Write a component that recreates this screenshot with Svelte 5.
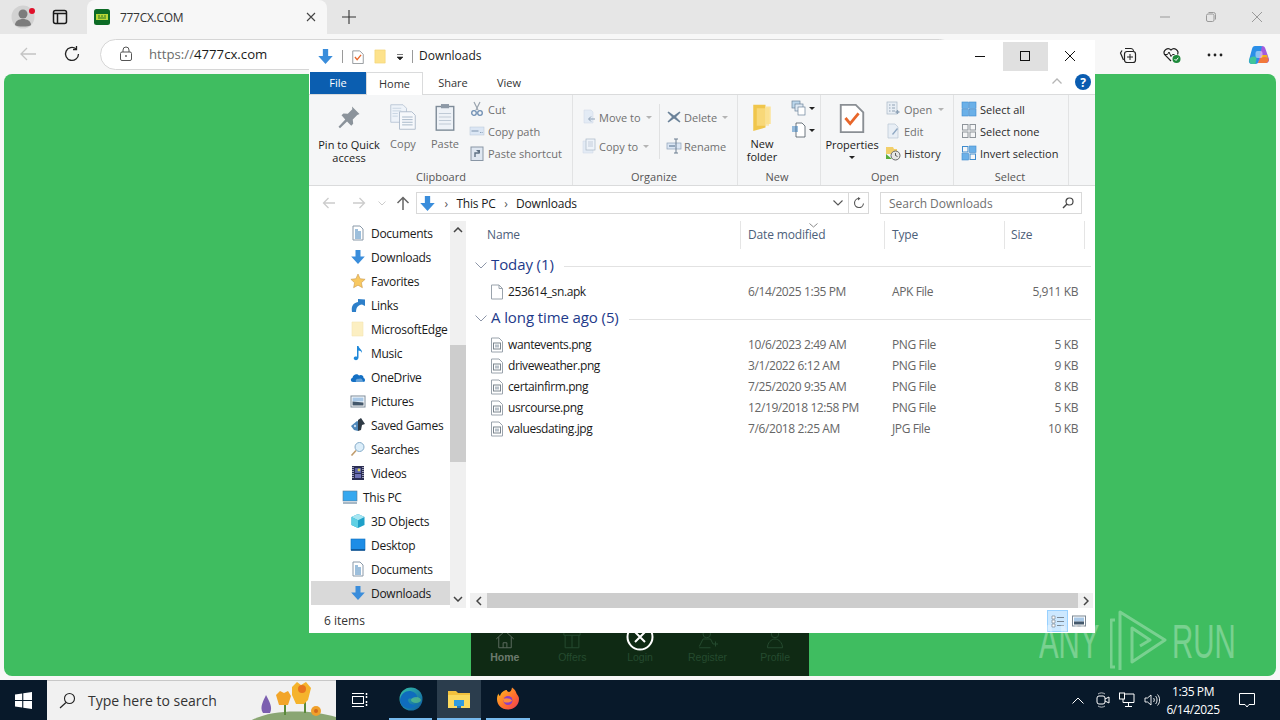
<script>
const icons = {
  dl: '<path d="M5.500 1h5v6.500h4.300L8 15 1.200 7.500h4.300z" fill="#3a8ddb"/>',
  doc: '<path d="M3 1h7l3 3v11H3z" fill="#fff" stroke="#8a99a8"/><path d="M5 5h3M5 7h6M5 9h6M5 11h6M5 13h6" stroke="#3b7fb8"/>',
  star: '<path d="M8 1l2.100 4.700 5 .6-3.700 3.400 1 5L8 12.200 3.600 14.700l1-5L.9 6.300l5-.6z" fill="#f8c860" stroke="#c99a50" stroke-width=".6"/>',
  links: '<path d="M2 15C1 9 3 6 8 5V2l7 .5V9l-3-1.500C8 8 6 10.500 6 15z" fill="#2d7fc9"/>',
  folderPale: '<path d="M2 1h11v14H2z" fill="#fcefc2" stroke="#f3e4b4" stroke-width=".6"/>',
  qfolder: '<path d="M2 1h11v14H2z" fill="#fde28c" stroke="#f0d070" stroke-width=".6"/>',
  music: '<path d="M7 1h1.500c.5 3 4 3.500 3.500 7-.6-2-2.500-2.500-3.500-2.600V12.500C8.500 14.500 6.600 15.500 5 15c-1.800-.6-1.500-3 .3-3.400.6-.1 1.200-.1 1.700.1z" fill="#1f88d9"/>',
  cloud: '<path d="M3 13c-2.500 0-3-3.500-.5-4.200C3 5.500 7 4 9 6.500c2.500-1.500 5 .5 4.500 2.500 2 .4 2 4 0 4z" fill="#1470c4"/><path d="M6 13c-1-2 1-4 3-3 1.500-1 3.500 0 3.500 1.500l1.500 1.500z" fill="#fff" opacity=".35"/>',
  pictures: '<rect x="1" y="3" width="14" height="11" fill="#fff" stroke="#7d8b99"/><path d="M2.500 4.500h11v4H2.500z" fill="#a9c8e6"/><path d="M2.500 8.500c4 0 7 1 11 1v3h-11z" fill="#44586b"/>',
  games: '<path d="M1 9l6-5 2 1-1 9-4-1z" fill="#4d86b8"/><path d="M8 3l3-2 4 6-3 1-1 5-3 1z" fill="#2f3a45"/><circle cx="5" cy="9" r="1.200" fill="#c5dcf0"/>',
  search: '<circle cx="9.500" cy="6" r="4.500" fill="#dceefa" stroke="#86acc9"/><path d="M6 9.500L1.500 14.500" stroke="#c09c6c" stroke-width="1.600"/>',
  videos: '<rect x="2" y="1" width="12" height="14" fill="#2a2d52"/><path d="M3 2v12M13 2v12" stroke="#dde" stroke-width="1.300" stroke-dasharray="1 1"/><rect x="5" y="3" width="6" height="5" fill="#5a60a8"/><rect x="5" y="9" width="6" height="4" fill="#6d70b5"/><circle cx="9" cy="5" r="1.400" fill="#d6cf55"/>',
  pc: '<rect x="1" y="2" width="14" height="10" fill="#36a8ef" stroke="#5b7a94" stroke-width=".6"/><path d="M1 14h14" stroke="#8aa0b3" stroke-width="1.500"/>',
  objects: '<path d="M8 1l6.500 3v8L8 15l-6.500-3V4z" fill="#1ea0c8"/><path d="M8 1l6.500 3L8 7.200 1.500 4z" fill="#a7e6f2"/><path d="M1.500 4L8 7.200V15l-6.500-3z" fill="#5fd0e4"/>',
  desktop: '<rect x="1" y="2" width="14" height="11" fill="#1d8de6" stroke="#0e6dbb" stroke-width=".6"/><path d="M1 13h14" stroke="#0b4e8c" stroke-width="1.500"/>',
  file: '<path d="M2.500 1h7.500l3.500 3.500v10.500H2.500z" fill="#fff" stroke="#9aa3ac"/><path d="M10 1v3.500h3.500" fill="none" stroke="#9aa3ac"/>',
  img: '<path d="M2.500 1h7.500l3.500 3.500v10.500H2.500z" fill="#fff" stroke="#9aa3ac"/><rect x="4.500" y="6" width="7" height="6" fill="#fff" stroke="#7b858e"/><rect x="6" y="7.500" width="4" height="3" fill="#b8c1c9"/>',
  pin: '<path d="M10 1l5 5-1.500.6-3 3 .3 2.900-1.300 1.300-2.800-2.800L2 15.500l-1-1 4.500-4.800L3 6.900l1.300-1.300 2.900.3 3-3z" fill="#8b939b"/>',
  copy: '<path d="M1 1h7l2 2v8H1z" fill="#eef3f9" stroke="#b7c4d3" stroke-width=".5"/><path d="M6 5h7l2 2v8H6z" fill="#f6f8fb" stroke="#aab8c8" stroke-width=".5"/><path d="M7.500 8h6M7.500 9.500h6M7.500 11h6M7.500 12.500h6" stroke="#9fb0c4" stroke-width=".5"/><path d="M2 3h5M2 4.500h5M2 6h3M2 7.500h3" stroke="#c6d2e0" stroke-width=".5"/>',
  paste: '<rect x="3" y="2" width="10" height="13.500" fill="#eef2f7" stroke="#7e8b98" stroke-width=".8"/><rect x="5.700" y=".6" width="4.600" height="2.400" fill="#8d99a6"/><path d="M4.500 6h7M4.500 8h7M4.500 10h7M4.500 12h7" stroke="#bfcad6" stroke-width=".6"/>',
  cut: '<path d="M5 1l4 8M11 1L7 9" stroke="#9aa4ae" stroke-width="1.200"/><circle cx="5" cy="12" r="2.300" fill="none" stroke="#6f8eb3" stroke-width="1.300"/><circle cx="11" cy="12" r="2.300" fill="none" stroke="#6f8eb3" stroke-width="1.300"/>',
  path: '<rect x="1" y="4" width="14" height="8" fill="#dbe6f4" stroke="#b7c6d8" stroke-width=".5"/><path d="M2.500 8h7M11 9.500h.8M12.700 9.500h.8" stroke="#7c93ad"/>',
  shortcut: '<rect x="2" y="2" width="12" height="13.500" fill="#dfe7f1" stroke="#8996a5"/><path d="M6 12V8h4" fill="none" stroke="#5f7184" stroke-width="1.400"/><path d="M7 5h4v4z" fill="#5f7184"/>',
  move: '<path d="M3 1h7l2 2v11H3z" fill="#e3ebf5" stroke="#ccd7e4" stroke-width=".5"/><path d="M14 10H8M10 7.500L7.500 10l2.500 2.500" stroke="#8fa2b7" fill="none"/>',
  copyto: '<path d="M2 3h10v12H2z" fill="#e3ebf5" stroke="#ccd7e4" stroke-width=".5"/><rect x="5" y="1" width="9" height="11" fill="#eef3f9" stroke="#a9b7c6" stroke-width=".7"/><path d="M7 4h5M7 6h5M7 8h5" stroke="#a9b7c6" stroke-width=".6"/>',
  del: '<path d="M2.500 2.500L8 6.500l5.500-4 1 1L10 8l4.500 4.500-1 1L8 9.500l-5.500 4-1-1L6 8 1.500 3.500z" fill="#6b8299"/>',
  rename: '<rect x="1" y="5" width="14" height="6" fill="#dbe6f4" stroke="#8fa2b7" stroke-width=".7"/><path d="M3 8h6" stroke="#7c93ad" stroke-width="1.500"/><path d="M10 1v14M8 1h4M8 15h4" stroke="#6b7d90"/>',
  folderBig: '<path d="M3 1h7v13l-7 2z" fill="#f0c64c"/><path d="M10 2h3v10h-3z" fill="#fbe39a"/><path d="M5 3h7v10H5z" fill="#fbdf8b" opacity=".7"/>',
  newItem: '<rect x="1" y="1" width="8" height="7" fill="#bcd7ec" stroke="#6b8299" stroke-width=".7"/><rect x="4" y="4" width="8" height="7" fill="#dfeaf4" stroke="#6b8299" stroke-width=".7"/><rect x="7" y="7" width="7" height="8" fill="#fff" stroke="#6b8299" stroke-width=".7"/>',
  easy: '<path d="M5 1h6l3 3v11H5z" fill="#fff" stroke="#4a5560" stroke-width=".8"/><path d="M1 5h6M1 7h6M1 9h6" stroke="#1f6fb5" stroke-width=".9"/>',
  props: '<path d="M2 1h8l4 4v10.500H2z" fill="#fff" stroke="#8a8f94"/><path d="M4.500 8l2.500 3 4.500-5.500" fill="none" stroke="#e8662a" stroke-width="1.500"/>',
  open: '<rect x="2" y="1" width="10" height="12" fill="#e8eef5" stroke="#a9b7c6" stroke-width=".7"/><path d="M4 4h1.500M4 7h1.500M4 10h1.500M7 4h3M7 7h3M7 10h3" stroke="#91a2b4"/><path d="M10.500 11h4M12.500 9v4" stroke="#8ca0b5" stroke-width="1.300"/>',
  edit: '<path d="M3 1h7l3 3v11H3z" fill="#e8eef5" stroke="#b7c4d3" stroke-width=".7"/><path d="M7 11l5-6 1 1-5 6z" fill="#8fa8c2"/>',
  history: '<path d="M1 2h7l1 2h3v5H1z" fill="#f2cf6a"/><path d="M1 9l6 5H1z" fill="#58ad3a"/><circle cx="10.500" cy="10.500" r="4.500" fill="#e6e6e6" stroke="#666"/><path d="M10.500 8v2.500l2 1" stroke="#333" fill="none" stroke-width=".8"/>',
  selAll: '<rect x="1" y="1" width="6.500" height="6.500" fill="#6ab0e8" stroke="#3e8bcd" stroke-width=".6"/><rect x="8.500" y="1" width="6.500" height="6.500" fill="#6ab0e8" stroke="#3e8bcd" stroke-width=".6"/><rect x="1" y="8.500" width="6.500" height="6.500" fill="#6ab0e8" stroke="#3e8bcd" stroke-width=".6"/><rect x="8.500" y="8.500" width="6.500" height="6.500" fill="#6ab0e8" stroke="#3e8bcd" stroke-width=".6"/>',
  selNone: '<rect x="1.500" y="1.500" width="5.500" height="5.500" fill="none" stroke="#8e949a"/><rect x="9" y="1.500" width="5.500" height="5.500" fill="none" stroke="#8e949a"/><rect x="1.500" y="9" width="5.500" height="5.500" fill="none" stroke="#8e949a"/><rect x="9" y="9" width="5.500" height="5.500" fill="none" stroke="#8e949a"/>',
  selInv: '<rect x="1.500" y="1.500" width="5.500" height="5.500" fill="none" stroke="#3e8bcd"/><rect x="8.500" y="1" width="6.500" height="6.500" fill="#6ab0e8" stroke="#3e8bcd" stroke-width=".6"/><rect x="1" y="8.500" width="6.500" height="6.500" fill="#6ab0e8" stroke="#3e8bcd" stroke-width=".6"/><rect x="9" y="9" width="5.500" height="5.500" fill="none" stroke="#3e8bcd"/>',
  mHome: '<path d="M1 8L8 1.500 15 8M3 6.500V15h10V6.500M6.500 15v-4h3v4" fill="none" stroke="currentColor" stroke-width=".8"/>',
  mOffers: '<path d="M1.500 2h13v3h-13zM2.500 5v10h11V5M8 5v10" fill="none" stroke="currentColor" stroke-width=".8"/>',
  mRegister: '<circle cx="7" cy="4" r="3" fill="none" stroke="currentColor" stroke-width=".8"/><path d="M1 14l3-6h6l2 4M1 15h9M12 12h4M14 10v4" fill="none" stroke="currentColor" stroke-width=".8"/>',
  mProfile: '<circle cx="8" cy="4" r="3" fill="none" stroke="currentColor" stroke-width=".8"/><path d="M2 15c0-4 3-7 6-7s6 3 6 7z" fill="none" stroke="currentColor" stroke-width=".8"/>'
};
const nav = [
  ['doc','Documents'],['dl','Downloads'],['star','Favorites'],['links','Links'],['folderPale','MicrosoftEdge'],
  ['music','Music'],['cloud','OneDrive'],['pictures','Pictures'],['games','Saved Games'],['search','Searches'],['videos','Videos'],
  ['pc','This PC',1],['objects','3D Objects'],['desktop','Desktop'],['doc','Documents'],['dl','Downloads',0,1]
];
const recent = [
  ['wantevents.png','10/6/2023 2:49 AM','PNG File','5 KB'],
  ['driveweather.png','3/1/2022 6:12 AM','PNG File','9 KB'],
  ['certainfirm.png','7/25/2020 9:35 AM','PNG File','8 KB'],
  ['usrcourse.png','12/19/2018 12:58 PM','PNG File','5 KB'],
  ['valuesdating.jpg','7/6/2018 2:25 AM','JPG File','10 KB']
];
const tabs = [['Home','mHome'],['Offers','mOffers'],['Login',''],['Register','mRegister'],['Profile','mProfile']];
</script>

{#snippet ic(name, w = 16, h = w)}
  <svg class="ic" width={w} height={h} viewBox="0 0 16 16">{@html icons[name]}</svg>
{/snippet}

{#snippet small(name, label, dim = true, caret = false)}
  <div class="small" class:dim>
    {@render ic(name)}
    <span>{label}</span>
    {#if caret}<i class="caret" class:pale={dim}></i>{/if}
  </div>
{/snippet}

{#snippet row(icon, name, date, type, size)}
  <div class="frow">
    {@render ic(icon, 16)}
    <span class="fname">{name}</span>
    <span>{date}</span>
    <span>{type}</span>
    <span class="fsize">{size}</span>
  </div>
{/snippet}

<div class="page">
  <header class="tabstrip">
    <div class="profile">
      <svg width="24" height="24" viewBox="0 0 24 24"><circle cx="12" cy="12" r="11.500" fill="#d2d2d2"/><circle cx="12" cy="9" r="4.500" fill="#7c7c7c"/><path d="M4 20c0-4 4-6 8-6s8 2 8 6c-2 2-14 2-16 0z" fill="#7c7c7c"/></svg>
      <b class="dot"></b>
    </div>
    <svg class="tabsicon" width="16" height="16" viewBox="0 0 16 16"><rect x="1.500" y="1.500" width="13" height="13" rx="2" fill="none" stroke="#1a1a1a" stroke-width="1.500"/><path d="M1.500 4.500h13M5.500 4.500v10" stroke="#1a1a1a" stroke-width="1.500"/></svg>
    <div class="tab">
      <svg class="favicon" width="16" height="16" viewBox="0 0 16 16"><rect width="16" height="16" rx="2.500" fill="#0c6b25"/><rect x="2" y="5" width="12" height="6" fill="#b9d838"/><path d="M4 7h2M7 7h2M10 7h2M4 9h8" stroke="#2a7a22"/></svg>
      <span class="tabtitle">777CX.COM</span>
      <svg width="10" height="10" viewBox="0 0 10 10"><path d="M1 1l8 8M9 1L1 9" stroke="#444" stroke-width="1.100"/></svg>
    </div>
    <svg class="plus" width="14" height="14" viewBox="0 0 14 14"><path d="M7 0v14M0 7h14" stroke="#333" stroke-width="1.100"/></svg>
    <div class="winctl">
      <svg width="10" height="10" viewBox="0 0 10 10"><path d="M0 5h10" stroke="#9a9a9a"/></svg>
      <svg width="10" height="10" viewBox="0 0 10 10"><rect x=".5" y="2" width="7.500" height="7.500" rx="1.500" fill="none" stroke="#9a9a9a"/><path d="M2.500 .5h5a2 2 0 0 1 2 2v5" fill="none" stroke="#9a9a9a"/></svg>
      <svg width="10" height="10" viewBox="0 0 10 10"><path d="M0 0l10 10M10 0L0 10" stroke="#9a9a9a"/></svg>
    </div>
  </header>

  <div class="toolbar">
    <svg class="tb-back" width="18" height="16" viewBox="0 0 18 16"><path d="M17 8H2M8 2L2 8l6 6" fill="none" stroke="#c4c4c4" stroke-width="1.300"/></svg>
    <svg class="tb-reload" width="18" height="18" viewBox="0 0 18 18"><path d="M15.500 9A6.500 6.500 0 1 1 13 3.800" fill="none" stroke="#222" stroke-width="1.300"/><path d="M13.500 1v3.500H10" fill="none" stroke="#222" stroke-width="1.300"/></svg>
    <div class="urlbar">
      <svg width="14" height="16" viewBox="0 0 14 16"><rect x="1.500" y="6" width="11" height="8.500" rx="1.500" fill="none" stroke="#555"/><path d="M4 6V4a3 3 0 0 1 6 0v2" fill="none" stroke="#555"/><circle cx="7" cy="10" r=".9" fill="#555"/></svg>
      <span class="url"><span class="scheme">https://</span>4777cx.com</span>
    </div>
    <div class="tbtools">
      <svg width="18" height="18" viewBox="0 0 18 18"><path d="M6 2.500h6a2.500 2.500 0 0 1 2.500 2.500" fill="none" stroke="#222"/><rect x="5.500" y="5.500" width="11" height="11" rx="2.500" fill="none" stroke="#222" stroke-width="1.200"/><path d="M11 8v6M8 11h6" stroke="#222"/><path d="M3 4.500L1.500 7l3 7" fill="none" stroke="#222" stroke-width="1.200"/></svg>
      <svg width="20" height="18" viewBox="0 0 20 18"><path d="M9 15L2.500 8.500A4 4 0 0 1 9 4a4 4 0 0 1 6.500 4.500" fill="none" stroke="#222" stroke-width="1.200"/><path d="M2 8.500h3.500l1.500-2.500 2 4.500 1.500-2h2" fill="none" stroke="#222"/><circle cx="14.500" cy="13" r="4" fill="#1d8a3a"/><path d="M12.500 13l1.500 1.500 2.300-2.800" fill="none" stroke="#fff"/></svg>
      <svg width="16" height="4" viewBox="0 0 16 4"><circle cx="2" cy="2" r="1.400" fill="#222"/><circle cx="8" cy="2" r="1.400" fill="#222"/><circle cx="14" cy="2" r="1.400" fill="#222"/></svg>
      <svg width="22" height="22" viewBox="0 0 22 22"><path d="M7 2h6c1.500 0 2 1 1.500 3L11 17c-.5 2-2 3-3.500 3H4C1.500 20 .5 18.500 1 16L4 5c.4-2 1.500-3 3-3z" fill="#2b8fe8"/><path d="M1.500 15c2-3 5-3 7-1l-1 6H4c-2.500 0-3-3-2.500-5z" fill="#3fc59a"/><path d="M14 2c2 0 3 1 3.500 3L21 15c.5 2-1 4-3 4H10z" fill="#a25cdc"/><path d="M10 19l3-6c3-1 6 0 7.500 2 .5 2-1 4-3 4z" fill="#f2793a"/><path d="M14 11h5l1 3c-2-1-4-1.500-7 0z" fill="#f0b21c"/><rect x="7.500" y="7" width="7" height="7" rx="2" fill="#fff" opacity=".45"/></svg>
    </div>
  </div>

  <main class="viewport">
    <div class="green"></div>
  </main>

  <footer class="taskbar">
    <div class="start"><svg width="17" height="17" viewBox="0 0 17 17"><path d="M0 2.500l7.200-1v6.500H0zM8.300 1.300L17 0v8H8.300zM0 9h7.200v6.500L0 14.500zM8.300 9H17v8l-8.700-1.300z" fill="#fff"/></svg></div>
    <div class="tsearch">
      <svg width="17" height="17" viewBox="0 0 17 17"><circle cx="10.500" cy="6.500" r="5" fill="none" stroke="#222" stroke-width="1.100"/><path d="M7 10.500L1 16" stroke="#222" stroke-width="1.200"/></svg>
      <span>Type here to search</span>
      <svg class="flowers" width="86" height="40" viewBox="0 0 86 40"><path d="M0 40c20-12 60-12 86-4v4z" fill="#8aa673"/><path d="M13 32c-4-6 1-13 3-18 3 6 7 12 4 18z" fill="#7c5fb0"/><path d="M35 34V18M55 32V14" stroke="#5a8a3a" stroke-width="2"/><path d="M26 14l4-4 4 2 4-2 3 5-3 9h-9z" fill="#f2a52a"/><path d="M42 6l5-5 4 3 5-3 5 6-3 12-4 4h-8l-4-9z" fill="#f5b32c"/><circle cx="52" cy="8" r="4" fill="#e8751e"/><circle cx="66" cy="30" r="5" fill="#f0a02a"/><circle cx="66" cy="30" r="2" fill="#d2691e"/></svg>
    </div>
    <div class="tbtn"><svg width="16" height="16" viewBox="0 0 16 16"><path d="M0 1.500h12M0 14.500h12" stroke="#fff"/><rect x=".5" y="4.500" width="11" height="7" fill="none" stroke="#fff"/><path d="M14.500 1v5M14.500 9v6" stroke="#fff" stroke-width="1.500" stroke-dasharray="2 1"/></svg></div>
    <div class="tapp edge">
      <svg width="24" height="24" viewBox="0 0 24 24"><defs><linearGradient id="ed" x1="0" y1="0" x2="1" y2="1"><stop offset="0" stop-color="#35c1a8"/><stop offset="1" stop-color="#0c59a4"/></linearGradient></defs><circle cx="12" cy="12" r="11.500" fill="url(#ed)"/><path d="M1 13C2 6 8 3 13 4.500c4 1.200 5.500 4 5 7h-7c-2 0-2.500 2-1 4 1.500 2 5 3 8 1.500-2 3-5 5-9 4.500C4 20.500 1 17 1 13z" fill="#0f6cbd"/><ellipse cx="17" cy="13" rx="5" ry="3" fill="#7ae07a" opacity=".5"/></svg>
    </div>
    <div class="tapp active">
      <svg width="24" height="22" viewBox="0 0 24 22"><path d="M1 3h8l2 2h12v14H1z" fill="#f2c13d"/><path d="M1 7h22v13H1z" fill="#fbd95f"/><rect x="7" y="12" width="10" height="6" fill="#2f9be0"/><rect x="10" y="18" width="4" height="2" fill="#2478b8"/></svg>
    </div>
    <div class="tapp">
      <svg width="24" height="24" viewBox="0 0 24 24"><defs><linearGradient id="ff" x1="0" y1="0" x2="1" y2="1"><stop offset="0" stop-color="#ffc21e"/><stop offset=".6" stop-color="#ff6a2e"/><stop offset="1" stop-color="#e83a5c"/></linearGradient></defs><path d="M12 22.500C5.500 22.500 1 18 1 12c0-2 .5-4 1.500-5.500.2 1.500.8 2 1.500 2.500C5 5.500 8 3 11 3c-.5 1 .5 1.500 2 2 2-.3 2.500-2 3-4.500 3 2 4 4 4.500 6 1 1.500 2.500 3 2.500 5.500 0 6-5 10.500-11 10.500z" fill="url(#ff)"/><circle cx="12" cy="13.500" r="4.500" fill="#8a3fc4"/><path d="M7 12c3-1.500 7-1 9 1.500-1 1.500-5 3-8 1.500z" fill="#ff8a3c"/></svg>
    </div>
    <div class="tray">
      <svg width="12" height="7" viewBox="0 0 12 7"><path d="M.5 6.500L6 1l5.500 5.500" fill="none" stroke="#fff"/></svg>
      <svg width="14" height="16" viewBox="0 0 14 16"><rect x="1" y="4" width="8" height="8" rx="2" fill="none" stroke="#fff"/><path d="M9 7l4-2v6l-4-2" fill="none" stroke="#fff"/><path d="M2 2c2-1.500 5-1.500 7 0M2 14c2 1.500 5 1.500 7 0" stroke="#fff" fill="none" stroke-width=".7"/></svg>
      <svg width="16" height="16" viewBox="0 0 16 16"><path d="M4 2h11v8.500H4zM9.500 10.500V14M6 14.500h7" fill="none" stroke="#fff"/><rect x=".5" y="1" width="5" height="6" fill="#0b1a26" stroke="#fff"/></svg>
      <svg width="16" height="16" viewBox="0 0 16 16"><path d="M1 6v4h2.500L7 13V3L3.500 6zM9.500 6c1 1 1 3 0 4M11.500 4c2 2 2 6 0 8M13.500 2.500c2.800 3 2.800 8 0 11" fill="none" stroke="#fff" stroke-width=".9"/></svg>
    </div>
    <div class="clock"><span>1:35 PM</span><span>6/14/2025</span></div>
    <svg class="notif" width="16" height="16" viewBox="0 0 16 16"><path d="M.5 1.500h15v11H10L8 15l-2-2.500H.5z" fill="none" stroke="#fff"/></svg>
  </footer>

  <nav class="mobilenav">
    {#each tabs as [t, mi], i}
      <div class="mtab" class:on={i === 0}>
        {#if i === 2}
          <svg class="closecircle" width="28" height="28" viewBox="0 0 28 28"><circle cx="14" cy="14" r="12.500" fill="none" stroke="#fff" stroke-width="2"/><path d="M9 9l10 10M19 9L9 19" stroke="#fff" stroke-width="2"/></svg>
        {:else}
          {@render ic(mi, 20)}
        {/if}
        <span>{t}</span>
      </div>
    {/each}
  </nav>

  <div class="explorer">
    <div class="titlebar">
      <div class="qat">
        {@render ic('dl', 17)}
        <i class="qsep"></i>
        {@render ic('props', 14)}
        {@render ic('qfolder', 15)}
        <svg width="8" height="8" viewBox="0 0 8 8"><path d="M1 1.500h6M1 4l3 3 3-3z" fill="#222" stroke="#222" stroke-width=".6"/></svg>
        <i class="qsep"></i>
      </div>
      <span class="wintitle">Downloads</span>
      <div class="ctl"><svg width="10" height="10" viewBox="0 0 10 10"><path d="M0 5.500h10" stroke="#111"/></svg></div>
      <div class="ctl hover"><svg width="10" height="10" viewBox="0 0 10 10"><rect x=".5" y=".5" width="9" height="9" fill="none" stroke="#111"/></svg></div>
      <div class="ctl"><svg width="10" height="10" viewBox="0 0 10 10"><path d="M0 0l10 10M10 0L0 10" stroke="#111"/></svg></div>
    </div>

    <div class="ribtabs">
      <div class="rt file">File</div>
      <div class="rt home">Home</div>
      <div class="rt">Share</div>
      <div class="rt">View</div>
      <svg class="collapse" width="10" height="6" viewBox="0 0 10 6"><path d="M.5 5.500L5 1l4.500 4.500" fill="none" stroke="#b5b5b5" stroke-width="1.300"/></svg>
      <svg class="help" width="16" height="16" viewBox="0 0 16 16"><circle cx="8" cy="8" r="8" fill="#0a5cb0"/><text x="8" y="12.500" text-anchor="middle" font-size="12" font-weight="700" fill="#fff" font-family="Open Sans, sans-serif">?</text></svg>
    </div>

    <div class="ribbon">
      <section class="grp g-clip">
        <div class="gbody">
          <div class="big pinb">{@render ic('pin', 24)}<span>Pin to Quick<br />access</span></div>
          <div class="big dim copyb">{@render ic('copy', 28)}<span>Copy</span></div>
          <div class="big dim pasteb">{@render ic('paste', 28)}<span>Paste</span></div>
          <div class="smalls">
            {@render small('cut','Cut')}
            {@render small('path','Copy path')}
            {@render small('shortcut','Paste shortcut')}
          </div>
        </div>
        <h4>Clipboard</h4>
      </section>
      <section class="grp g-org">
        <div class="gbody">
          <div class="smalls two">
            {@render small('move','Move to',true,true)}
            {@render small('copyto','Copy to',true,true)}
          </div>
          <i class="vsep"></i>
          <div class="smalls two">
            {@render small('del','Delete',true,true)}
            {@render small('rename','Rename')}
          </div>
        </div>
        <h4>Organize</h4>
      </section>
      <section class="grp g-new">
        <div class="gbody">
          <div class="big newb">{@render ic('folderBig', 28)}<span>New<br />folder</span></div>
          <div class="mini">
            <div>{@render ic('newItem')}<i class="caret"></i></div>
            <div>{@render ic('easy')}<i class="caret"></i></div>
          </div>
        </div>
        <h4>New</h4>
      </section>
      <section class="grp g-open">
        <div class="gbody">
          <div class="big propb">{@render ic('props', 30)}<span>Properties</span><i class="caret"></i></div>
          <div class="smalls">
            {@render small('open','Open',true,true)}
            {@render small('edit','Edit')}
            <div class="small dark2">{@render ic('history')}<span>History</span></div>
          </div>
        </div>
        <h4>Open</h4>
      </section>
      <section class="grp g-sel">
        <div class="gbody">
          <div class="smalls">
            {@render small('selAll','Select all',false)}
            {@render small('selNone','Select none',false)}
            {@render small('selInv','Invert selection',false)}
          </div>
        </div>
        <h4>Select</h4>
      </section>
    </div>

    <div class="navbar">
      <div class="arrows">
        <svg width="14" height="12" viewBox="0 0 14 12"><path d="M13 6H2M6.500 1L1.500 6l5 5" fill="none" stroke="#ccc" stroke-width="1.300"/></svg>
        <svg width="14" height="12" viewBox="0 0 14 12"><path d="M1 6h11M7.500 1l5 5-5 5" fill="none" stroke="#ccc" stroke-width="1.300"/></svg>
        <svg width="8" height="5" viewBox="0 0 8 5"><path d="M.5.500L4 4 7.500.5" fill="none" stroke="#ccc"/></svg>
        <svg width="14" height="14" viewBox="0 0 14 14"><path d="M7 14V2M1.500 7L7 1.500 12.500 7" fill="none" stroke="#666" stroke-width="1.500"/></svg>
      </div>
      <div class="addr">
        <div class="crumbs">
          {@render ic('dl', 17)}
          <span class="gt">›</span><span>This PC</span><span class="gt">›</span><span>Downloads</span>
        </div>
        <svg class="addrdown" width="10" height="6" viewBox="0 0 10 6"><path d="M.5.500L5 5 9.500.5" fill="none" stroke="#555" stroke-width="1.100"/></svg>
        <div class="refresh"><svg width="12" height="12" viewBox="0 0 12 12"><path d="M10.500 6.500A4.500 4.500 0 1 1 6 1.500" fill="none" stroke="#555" stroke-width="1.100"/><path d="M5 0l2.500 1.500L5 3.500z" fill="#555"/></svg></div>
      </div>
      <div class="searchbox">
        <span>Search Downloads</span>
        <svg width="12" height="12" viewBox="0 0 12 12"><circle cx="7.500" cy="4.500" r="3.500" fill="none" stroke="#444" stroke-width="1.200"/><path d="M5 7l-4 4" stroke="#444" stroke-width="1.500"/></svg>
      </div>
    </div>

    <div class="body">
      <aside class="side">
        <div class="tree">
          {#each nav as [icon, label, top, sel]}
            <div class="node" class:top class:sel>
              {@render ic(icon, 16)}
              <span>{label}</span>
            </div>
          {/each}
        </div>
        <div class="vscroll">
          <svg width="10" height="6" viewBox="0 0 10 6"><path d="M1 5l4-4 4 4" fill="none" stroke="#444" stroke-width="1.500"/></svg>
          <div class="vtrack"><div class="vthumb"></div></div>
          <svg width="10" height="6" viewBox="0 0 10 6"><path d="M1 1l4 4 4-4" fill="none" stroke="#444" stroke-width="1.500"/></svg>
        </div>
      </aside>
      <div class="list">
        <div class="colhead">
          <span class="c-name">Name</span>
          <span class="c-date">Date modified</span>
          <span class="c-type">Type</span>
          <span class="c-size">Size</span>
          <svg class="sortmark" width="9" height="5" viewBox="0 0 9 5"><path d="M.5.500L4.500 4 8.500.5" fill="none" stroke="#8a8a8a"/></svg>
        </div>
        <div class="rows">
          <div class="ghead"><svg width="12" height="7" viewBox="0 0 12 7"><path d="M.5.500L6 6l5.500-5.500" fill="none" stroke="#8d96a8"/></svg><span>Today (1)</span><i></i></div>
          {@render row('file','253614_sn.apk','6/14/2025 1:35 PM','APK File','5,911 KB')}
          <div class="ghead"><svg width="12" height="7" viewBox="0 0 12 7"><path d="M.5.500L6 6l5.500-5.500" fill="none" stroke="#8d96a8"/></svg><span>A long time ago (5)</span><i></i></div>
          {#each recent as r}
            {@render row('img', r[0], r[1], r[2], r[3])}
          {/each}
        </div>
        <div class="hscroll">
          <svg width="6" height="10" viewBox="0 0 6 10"><path d="M5 1L1 5l4 4" fill="none" stroke="#444" stroke-width="1.500"/></svg>
          <div class="hthumb"></div>
          <svg width="6" height="10" viewBox="0 0 6 10"><path d="M1 1l4 4-4 4" fill="none" stroke="#444" stroke-width="1.500"/></svg>
        </div>
      </div>
    </div>

    <div class="status">
      <span>6 items</span>
      <div class="viewbtns">
        <div class="vb on"><svg width="16" height="16" viewBox="0 0 16 16"><path d="M2 3h3v3H2zM2 7h3v3H2zM2 11h3v3H2z" fill="#fff" stroke="#7b8894" stroke-width=".7"/><path d="M7 4.500h7M7 8.500h7M7 12.500h7" stroke="#7b8894"/></svg></div>
        <div class="vb"><svg width="14" height="14" viewBox="0 0 14 14"><rect x=".5" y="2" width="13" height="10" fill="#fff" stroke="#7b8894"/><rect x="2" y="3.500" width="10" height="4" fill="#a9c8e6"/><rect x="2" y="7.500" width="10" height="3" fill="#44586b"/></svg></div>
      </div>
    </div>
  </div>

  <div class="watermark">
    <span class="wm any">ANY</span>
    <svg width="62" height="62" viewBox="0 0 62 62"><path d="M5 10H1v47h4M10 60V2l45 28-33 22V18l18 12-10 6" fill="none" stroke="#fff" stroke-width="3" stroke-linejoin="round"/></svg>
    <span class="wm">RUN</span>
  </div>
</div>

<style>
  :global(body) { margin: 0; background: #f7f7f7; overflow: hidden; }
  .page { position: relative; width: 1280px; height: 720px; display: flex; flex-direction: column; overflow: hidden; font-family: "Open Sans", "Noto Sans", sans-serif; font-size: 12px; color: #1a1a1a; }
  .ic { flex: none; display: block; }
  svg { flex: none; display: block; }

  .tabstrip { height: 34px; flex: none; display: flex; align-items: center; background: #e6e6e6; }
  .profile { position: relative; margin-left: 11px; width: 24px; height: 24px; }
  .dot { position: absolute; top: 3px; right: 0; width: 6px; height: 6px; border-radius: 50%; background: #e0102a; }
  .tabsicon { margin-left: 17px; margin-right: 19px; }
  .tab { width: 240px; height: 34px; box-sizing: border-box; display: flex; align-items: center; padding: 0 11px 0 7px; background: #f7f7f7; border-radius: 8px 8px 0 0; }
  .tabtitle { margin-left: 10px; flex: 1; font-size: 12px; letter-spacing: -.3px; color: #333; }
  .plus { margin-left: 15px; }
  .winctl { margin-left: auto; display: flex; gap: 36px; padding-right: 18px; }

  .toolbar { height: 40px; flex: none; display: flex; align-items: center; background: #f7f7f7; box-sizing: border-box; }
  .tb-back { margin-left: 19px; }
  .tb-reload { margin-left: 26px; }
  .urlbar { margin-left: 19px; width: 855px; height: 31px; box-sizing: border-box; background: #fff; border: 1px solid #d6d6d6; border-radius: 16px; display: flex; align-items: center; padding-left: 18px; }
  .url { margin-left: 16px; font-size: 13.2px; margin-top: -1px; color: #1a1a1a; }
  .scheme { color: #6b6b6b; }
  .tbtools { position: absolute; top: 44px; left: 1119px; width: 151px; height: 22px; display: flex; justify-content: space-between; align-items: center; }

  .viewport { flex: 1; padding: 0 4px 4px; display: flex; background: #f7f7f7; }
  .green { flex: 1; background: #3fbd60; border-radius: 8px; }

  .taskbar { height: 40px; flex: none; display: flex; align-items: center; background: #08192a; color: #fff; }
  .start { width: 47px; display: flex; justify-content: center; }
  .tsearch { position: relative; width: 289px; height: 40px; box-sizing: border-box; background: #f1f1f1; display: flex; align-items: center; padding-left: 12px; gap: 12px; border-top: 1px solid #c8c8c8; overflow: hidden; }
  .tsearch span { color: #333; font-size: 14px; }
  .flowers { position: absolute; right: 0; top: 0; }
  .tbtn { width: 48px; display: flex; justify-content: center; }
  .tapp { width: 44px; height: 40px; margin-left: 5px; box-sizing: border-box; display: flex; align-items: center; justify-content: center; border-bottom: 2px solid #76b9ed; }
  .tapp.edge { margin-left: 5px; width: 43px; }
  .tapp.active { background: #2b3d4d; }
  .tray { margin-left: auto; display: flex; align-items: center; gap: 9px; }
  .tray svg:nth-child(1) { margin-right: 3px; }
  .clock { display: flex; flex-direction: column; align-items: center; width: 66px; line-height: 18px; font-size: 12px; letter-spacing: -.4px; padding-top: 1px; }
  .notif { margin: 0 25px 0 13px; }

  .mobilenav { position: absolute; left: 471px; top: 633px; width: 338px; height: 43px; background: #0f2a14; display: flex; }
  .mtab { flex: 1; display: flex; flex-direction: column; align-items: center; justify-content: flex-start; padding-top: 0; margin-top: -4px; font-size: 10.5px; line-height: 13px; color: #254a2f; position: relative; font-family: "Liberation Sans", sans-serif; }
  .mtab span { position: absolute; top: 22px; }
  .mtab .ic { color: #254a2f; }
  .mtab.on { color: #6c7a6e; font-weight: 700; }
  .mtab.on .ic { color: #5a6a5c; }
  .closecircle { position: absolute; top: -6px; }

  .explorer { position: absolute; left: 309px; top: 40px; width: 786px; height: 593px; background: #fff; display: flex; flex-direction: column; }
  .titlebar { height: 31px; flex: none; display: flex; align-items: center; padding-left: 8px; margin-top: 1px; }
  .qat { display: flex; align-items: center; gap: 8px; width: 102px; }
  .qsep { width: 1px; height: 13px; background: #9a9a9a; }
  .wintitle { flex: 1; margin-top: -2px; }
  .ctl { width: 45px; height: 29px; display: flex; align-items: center; justify-content: center; margin-top: -1px; }
  .ctl:last-child { margin-right: 2px; }
  .ctl.hover { background: #e0e0e0; }
  .ctl svg { margin-left: -2px; }

  .ribtabs { height: 22px; flex: none; display: flex; align-items: stretch; padding-left: 1px; position: relative; border-bottom: 1px solid #dadbdc; }
  .rt { width: 50px; display: flex; align-items: center; justify-content: center; font-size: 11px; color: #333; padding-bottom: 2px; box-sizing: border-box; }
  .rt.file { width: 56px; background: #0b5eb0; color: #fff; }
  .rt.home { width: 57px; margin-right: 5px; border: 1px solid #dadbdc; border-bottom: none; height: 23px; background: #fff; position: relative; }
  .rt:nth-child(4) { margin-left: 6px; }
  .collapse { position: absolute; right: 33px; top: 6px; }
  .help { position: absolute; right: 4px; top: 2px; }

  .ribbon { height: 91px; flex: none; display: flex; background: #f5f6f7; border-bottom: 1px solid #dadbdc; box-sizing: border-box; padding-left: 1px; color: #1a1a1a; }
  .grp { display: flex; flex-direction: column; border-right: 1px solid #e2e3e4; box-sizing: border-box; }
  .g-clip { width: 263px; }
  .g-org { width: 165px; }
  .g-new { width: 83px; }
  .g-open { width: 133px; }
  .g-sel { width: 115px; }
  .g-org h4 { padding-right: 2px; }
  .g-new h4 { padding-right: 4px; }
  .g-open h4 { padding-right: 4px; }
  .g-sel h4 { padding-right: 2px; }
  .gbody { flex: 1; display: flex; align-items: flex-start; min-height: 0; }
  .grp h4 { margin: 0; height: 17px; line-height: 18px; text-align: center; font-weight: 400; font-size: 11px; color: #555; flex: none; box-sizing: border-box; }
  .big { display: flex; flex-direction: column; align-items: center; text-align: center; font-size: 11px; line-height: 13px; }
  .big .ic { margin-bottom: 8px; }
  .big.dim { color: #6f6f6f; }
  .pinb { width: 62px; margin-left: 8px; padding-top: 10px; }
  .pinb .ic { margin-bottom: 9px; }
  .copyb { width: 46px; padding-top: 8px; }
  .copyb .ic { margin-bottom: 6px; }
  .pasteb { width: 38px; padding-top: 8px; }
  .pasteb .ic { margin-bottom: 6px; }
  .smalls { display: flex; flex-direction: column; padding-top: 3px; margin-left: 5px; }
  .smalls.two { padding-top: 11px; gap: 7px; margin-left: 9px; width: 72px; }
  .small { display: flex; align-items: center; gap: 3px; height: 22px; font-size: 11px; white-space: nowrap; color: #2a2a2a; }
  .small.dim { color: #707070; }
  .small.dark2 { color: #333; }
  .caret { width: 0; height: 0; border-left: 3px solid transparent; border-right: 3px solid transparent; border-top: 3px solid #222; margin-left: 2px; display: inline-block; flex: none; }
  .caret.pale { border-top-color: #b4b4b4; }
  .small .caret { margin-left: 3px; }
  .vsep { width: 1px; height: 55px; margin-top: 9px; background: #e0e1e2; margin-left: 3px; margin-right: -3px; }
  .g-org .smalls.two:first-child { margin-left: 8px; width: 76px; }
  .g-org .small { gap: 2px; }
  .newb { width: 48px; padding-top: 8px; margin-right: 5px; }
  .newb .ic { margin-bottom: 6px; }
  .mini { display: flex; flex-direction: column; padding-top: 5px; gap: 6px; }
  .mini div { display: flex; align-items: center; height: 16px; }
  .propb { width: 60px; margin-left: 1px; padding-top: 8px; }
  .propb .ic { margin-bottom: 5px; }
  .propb .caret { margin: 5px 0 0; }
  .g-open .smalls { margin-left: 3px; }
  .g-sel .smalls { margin-left: 7px; }
  .g-sel .small { gap: 3px; color: #2a2a2a; }

  .navbar { height: 35px; flex: none; display: flex; align-items: center; padding-bottom: 1px; box-sizing: border-box; }
  .arrows { display: flex; align-items: center; margin-left: 13px; gap: 16px; width: 94px; }
  .arrows svg:nth-child(3) { margin-left: -4px; }
  .arrows svg:nth-child(4) { margin-left: -6px; }
  .addr { width: 453px; height: 22px; box-sizing: border-box; border: 1px solid #d9d9d9; display: flex; align-items: center; }
  .crumbs { flex: 1; display: flex; align-items: center; gap: 5px; padding-left: 2px; letter-spacing: -.2px; }
  .gt { color: #555; margin: 0 3.5px; }
  .addrdown { margin-right: 5px; }
  .refresh { width: 19px; height: 20px; display: flex; align-items: center; justify-content: center; border-left: 1px solid #d9d9d9; }
  .searchbox { width: 202px; height: 22px; margin-left: 11px; box-sizing: border-box; border: 1px solid #d9d9d9; display: flex; align-items: center; justify-content: space-between; padding: 0 7px 0 8px; color: #707070; }

  .body { height: 389px; flex: none; display: flex; }
  .side { width: 157px; flex: none; display: flex; }
  .tree { width: 139px; margin-left: 2px; flex: none; }
  .node { height: 24px; display: flex; align-items: center; gap: 5px; padding-left: 39px; white-space: nowrap; overflow: hidden; letter-spacing: -.28px; }
  .node.top { padding-left: 31px; }
  .node.sel { background: #d9d9d9; }
  .vscroll { width: 16px; flex: none; background: #f0f0f0; display: flex; flex-direction: column; align-items: center; justify-content: space-between; padding: 6px 0; box-sizing: border-box; height: 387px; }
  .vtrack { flex: 1; width: 100%; }
  .vthumb { width: 100%; height: 117px; margin-top: 112px; background: #cdcdcd; }
  .list { flex: 1; display: flex; flex-direction: column; padding-left: 4px; min-width: 0; }
  .colhead { height: 28px; flex: none; position: relative; display: flex; align-items: center; color: #4c607a; letter-spacing: -.15px; }
  .colhead span { box-sizing: border-box; height: 28px; line-height: 27px; padding-left: 7px; border-right: 1px solid #e5e5e5; }
  .c-name { width: 271px; padding-left: 17px !important; }
  .c-date { width: 144px; }
  .c-type { width: 120px; }
  .c-size { width: 80px; padding-left: 6px !important; }
  .sortmark { position: absolute; left: 339px; top: 2px; }
  .rows { flex: 1; }
  .ghead { height: 32px; display: flex; align-items: center; padding-left: 5px; margin-right: 4px; }
  .ghead svg { margin-right: 4px; }
  .ghead span { font-size: 15px; color: #1e3a8a; margin-bottom: 3px; letter-spacing: -.1px; }
  .ghead i { flex: 1; height: 1px; background: #e2e2e2; margin: 3px 0 0 10px; }
  .frow { height: 21px; display: grid; grid-template-columns: 15px 236px 140px 100px 82px; align-items: center; padding-left: 19px; column-gap: 4px; color: #666; letter-spacing: -.4px; }
  .frow .fname { color: #1a1a1a; }
  .fsize { text-align: right; }
  .hscroll { height: 15px; flex: none; display: flex; align-items: center; background: #f0f0f0; padding: 0 4px 0 6px; margin: 0 2px 2px 0; gap: 5px; }
  .hthumb { flex: 1; height: 15px; background: #cdcdcd; }

  .status { flex: 1; display: flex; align-items: center; padding: 0 0 2px 15px; position: relative; color: #333; }
  .viewbtns { position: absolute; right: 6px; top: 0; display: flex; height: 22px; align-items: center; }
  .vb { width: 21px; height: 22px; display: flex; align-items: center; justify-content: center; box-sizing: border-box; }
  .vb.on { background: #cce8ff; border: 1px solid #99d1ff; }

  .watermark { position: absolute; left: 1039px; top: 610px; display: flex; align-items: center; opacity: .3; color: #fff; pointer-events: none; height: 62px; }
  .wm { font-family: "Liberation Sans", sans-serif; font-size: 49px; width: 60px; display: block; white-space: nowrap; transform-origin: left center; transform: scaleX(.6); }
  .wm.any { width: 71px; }
</style>
